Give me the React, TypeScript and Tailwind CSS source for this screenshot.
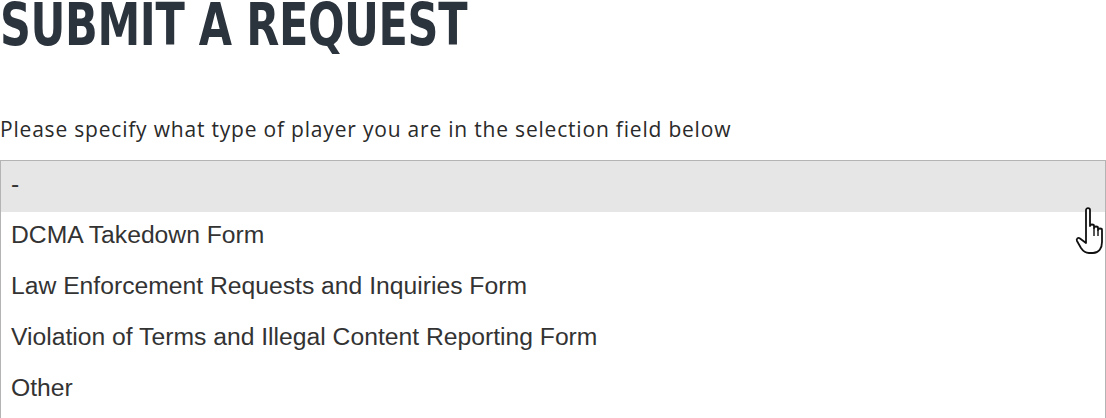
const OPTIONS = [
  "-",
  "DCMA Takedown Form",
  "Law Enforcement Requests and Inquiries Form",
  "Violation of Terms and Illegal Content Reporting Form",
  "Other",
];

function HandCursor() {
  return (
    <svg
      className="pointer-events-none absolute left-[1074px] top-[206px]"
      width="34"
      height="52"
      viewBox="0 0 34 52"
    >
      <path
        d="M12 4 C12 1.5 16 1.5 16 4 L16 20 C16 18 20 18 20 20 L20 22 C20 20 24 20 24 22 L24 24 C24 22 28 22 28 24 L28 36 C28 42 25 47 19 47 L15 47 C11 47 9 45 7 42 L3 35 C2 33 4 31 6 32.5 L12 37 Z"
        fill="#fff"
        stroke="#111"
        strokeWidth="1.8"
        strokeLinejoin="round"
      />
      <path d="M20 22 L20 30 M24 24 L24 30" stroke="#111" strokeWidth="1.4" />
    </svg>
  );
}

export default function App() {
  return (
    <div className="relative h-[418px] w-[1106px] overflow-hidden bg-white">
      <h1 className="h-[50px] origin-left scale-x-[0.81] whitespace-nowrap font-['DejaVu_Sans_Condensed','DejaVu_Sans',sans-serif] text-[59px] font-bold leading-[50px] tracking-[-0.5px] text-[#2b333d] font-stretch-condensed">
        SUBMIT A REQUEST
      </h1>
      <p className="mt-[65px] font-['Open_Sans',sans-serif] text-[21px] font-medium leading-[28px] tracking-[0.8px] text-[#2a2a2a]">
        Please specify what type of player you are in the selection field below
      </p>
      <div className="mt-[17px] border border-[#b4b4b4]">
        {OPTIONS.map((opt, i) => (
          <div
            key={opt}
            className={`h-[51px] px-[10px] pb-[6px] font-['Liberation_Sans',Arial,sans-serif] text-[24.7px] leading-[45px] text-[#333] ${
              i === 0 ? "bg-[#e6e6e6]" : ""
            }`}
          >
            {opt}
          </div>
        ))}
        <div className="h-[51px]" />
      </div>
      <HandCursor />
    </div>
  );
}
